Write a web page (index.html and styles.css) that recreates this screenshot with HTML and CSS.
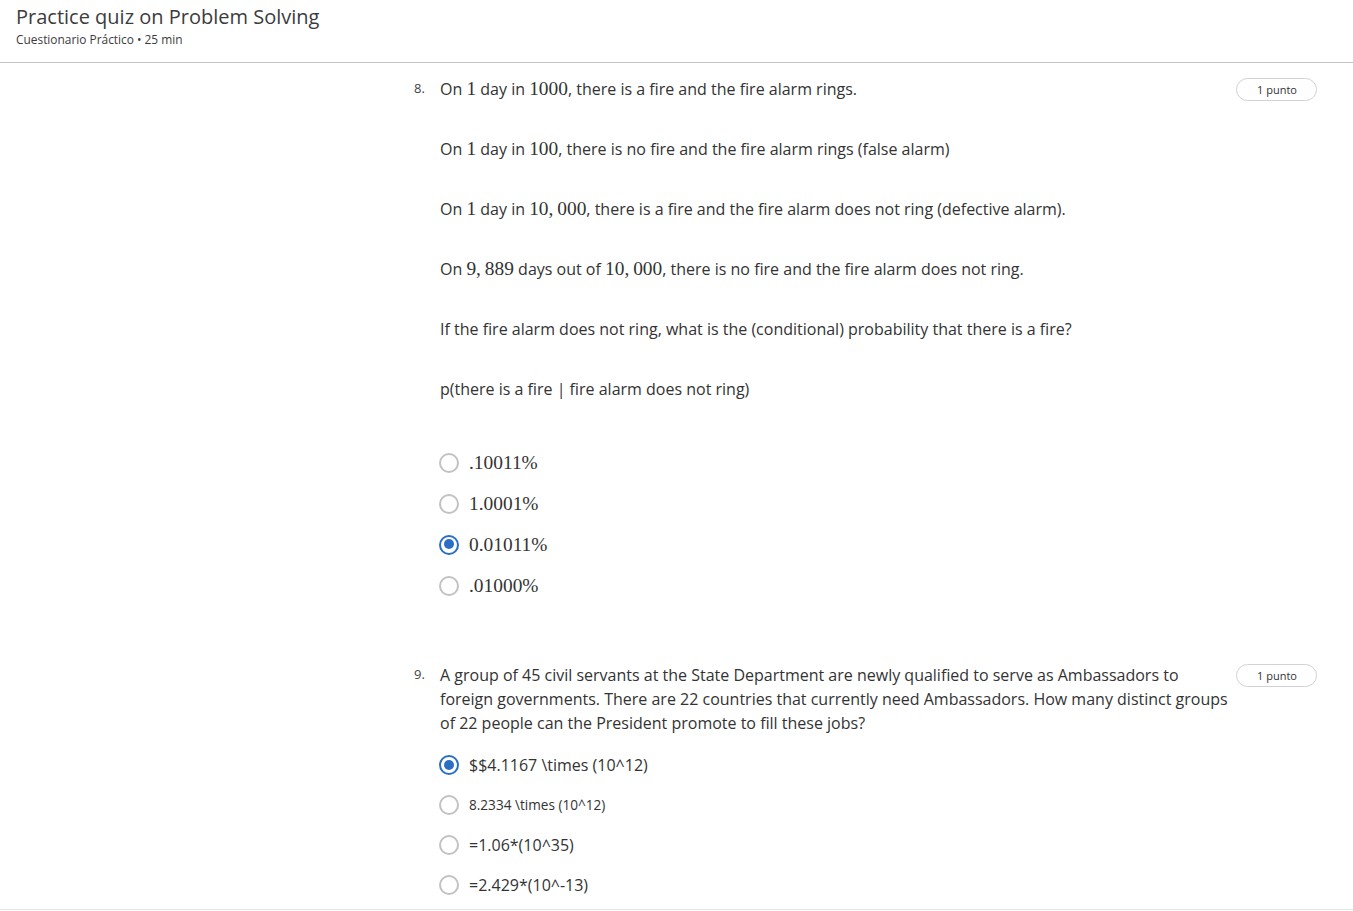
FILE: index.html
```html
<!DOCTYPE html>
<html>
<head>
<meta charset="utf-8">
<link rel="stylesheet" href="styles.css">
</head>
<body>
<header class="page-header">
  <div class="title">Practice quiz on Problem Solving</div>
  <div class="subtitle">Cuestionario Práctico • 25 min</div>
</header>
<main class="quiz">
  <section class="question q8">
    <div class="qnum">8.</div>
    <div class="qbody">
      <p class="para">On <span class="m">1</span> day in <span class="m">1000</span>, there is a fire and the fire alarm rings.</p>
      <p class="para">On <span class="m">1</span> day in <span class="m">100</span>, there is no fire and the fire alarm rings (false alarm)</p>
      <p class="para">On <span class="m">1</span> day in <span class="m">10,&thinsp;000</span>, there is a fire and the fire alarm does not ring (defective alarm).</p>
      <p class="para">On <span class="m">9,&thinsp;889</span> days out of <span class="m">10,&thinsp;000</span>, there is no fire and the fire alarm does not ring.</p>
      <p class="para">If the fire alarm does not ring, what is the (conditional) probability that there is a fire?</p>
      <p class="para last">p(there is a fire | fire alarm does not ring)</p>
      <div class="options opts8">
        <div class="opt"><span class="radio"></span><span class="label m">.10011%</span></div>
        <div class="opt"><span class="radio"></span><span class="label m">1.0001%</span></div>
        <div class="opt"><span class="radio checked"></span><span class="label m">0.01011%</span></div>
        <div class="opt"><span class="radio"></span><span class="label m">.01000%</span></div>
      </div>
    </div>
    <div class="points">1 punto</div>
  </section>
  <section class="question q9">
    <div class="qnum">9.</div>
    <div class="qbody">
      <p class="para last">A group of 45 civil servants at the State Department are newly qualified to serve as Ambassadors to foreign governments. There are 22 countries that currently need Ambassadors. How many distinct groups of 22 people can the President promote to fill these jobs?</p>
      <div class="options opts9">
        <div class="opt"><span class="radio checked"></span><span class="label">$$4.1167 \times (10^12)</span></div>
        <div class="opt"><span class="radio"></span><span class="label small">8.2334 \times (10^12)</span></div>
        <div class="opt"><span class="radio"></span><span class="label">=1.06*(10^35)</span></div>
        <div class="opt"><span class="radio"></span><span class="label">=2.429*(10^-13)</span></div>
      </div>
    </div>
    <div class="points">1 punto</div>
  </section>
</main>
<div class="page-bottom"></div>
</body>
</html>
```

FILE: styles.css
```css
html, body {
  margin: 0;
  padding: 0;
  background: #fff;
}
body {
  font-family: "Open Sans", "Noto Sans", sans-serif;
  color: #333;
  width: 1353px;
  height: 911px;
  overflow: hidden;
}
.page-header {
  padding: 5px 16px 15px;
  border-bottom: 1px solid #c4c4c4;
}
.title {
  font-size: 20px;
  line-height: 24px;
  color: #3c3c3c;
}
.subtitle {
  margin-top: 2px;
  font-size: 11.9px;
  line-height: 16px;
  color: #3c3c3c;
}
.quiz {
  margin-left: 414px;
  margin-right: 36px;
  padding-top: 14px;
}
.question {
  display: flex;
  align-items: flex-start;
}
.q9 {
  margin-top: 57px;
}
.qnum {
  width: 26px;
  flex: none;
  font-size: 13px;
  line-height: 22px;
  color: #444;
}
.qbody {
  flex: 1;
  min-width: 0;
}
.para {
  margin: 0 0 36px;
  font-size: 16px;
  line-height: 24px;
}
.para.last {
  margin-bottom: 0;
}
.m {
  font-family: "Liberation Serif", "DejaVu Serif", serif;
  font-size: 19.4px;
}
.points {
  flex: none;
  margin-left: 6px;
  margin-top: 1px;
  height: 21px;
  line-height: 21px;
  padding: 0 19px 0 20px;
  border: 1px solid #d2d2d2;
  border-radius: 12px;
  font-size: 11px;
  color: #333;
}
.options {
  display: flex;
  flex-direction: column;
}
.opts8 {
  margin-top: 41px;
}
.opts8 .opt {
  height: 41px;
}
.opts9 {
  margin-top: 10px;
}
.opts9 .opt {
  height: 40px;
}
.opt {
  display: flex;
  align-items: center;
}
.radio {
  box-sizing: border-box;
  width: 20px;
  height: 20px;
  margin-left: -1px;
  border: 2px solid #c2c2c2;
  border-radius: 50%;
  flex: none;
  position: relative;
  background: #fff;
}
.radio.checked {
  border: 2.5px solid #2a6fc4;
}
.radio.checked::after {
  content: "";
  position: absolute;
  left: 2.5px;
  top: 2.5px;
  width: 10px;
  height: 10px;
  border-radius: 50%;
  background: #2a6fc4;
}
.label {
  margin-left: 10px;
  font-size: 16px;
  line-height: 24px;
}
.label.m {
  font-size: 19.4px;
}
.label.small {
  font-size: 13.6px;
}
.page-bottom {
  position: absolute;
  left: 0;
  right: 0;
  top: 909px;
  border-top: 1px solid #e6e6e6;
}
```
